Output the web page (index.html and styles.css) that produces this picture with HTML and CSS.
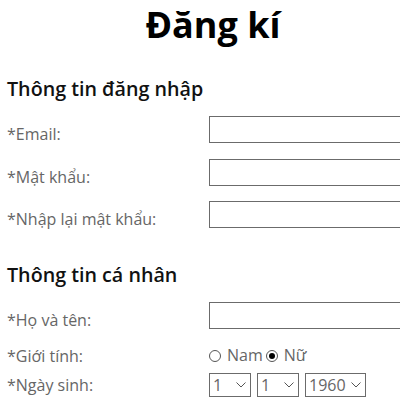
FILE: index.html
```html
<!DOCTYPE html>
<html lang="vi">
<head>
<meta charset="utf-8">
<title>Đăng kí</title>
<link rel="stylesheet" href="styles.css">
</head>
<body>
<div class="page">
  <h1 class="title">Đăng kí</h1>
  <h2 class="section">Thông tin đăng nhập</h2>
  <div class="rows">
    <div class="row"><label class="lbl">*Email:</label><input class="field" type="text"></div>
    <div class="row"><label class="lbl">*Mật khẩu:</label><input class="field" type="password"></div>
    <div class="row"><label class="lbl">*Nhập lại mật khẩu:</label><input class="field" type="password"></div>
  </div>
  <h2 class="section section-2">Thông tin cá nhân</h2>
  <div class="rows">
    <div class="row"><label class="lbl">*Họ và tên:</label><input class="field" type="text"></div>
  </div>
  <div class="row row-gender">
    <span class="lbl">*Giới tính:</span>
    <span class="choices">
      <label class="choice"><input class="radio" type="radio" name="gt">Nam</label>
      <label class="choice"><input class="radio" type="radio" name="gt" checked>Nữ</label>
    </span>
  </div>
  <div class="row row-date">
    <span class="lbl">*Ngày sinh:</span>
    <span class="selects">
      <select class="sel sel-s"><option>1</option></select>
      <select class="sel sel-s"><option>1</option></select>
      <select class="sel sel-l"><option>1960</option></select>
    </span>
  </div>
</div>
</body>
</html>
```
FILE: styles.css
```css
html, body {
  margin: 0;
  padding: 0;
  background: #fff;
  overflow: hidden;
}
body {
  font-family: "Open Sans", "Noto Sans", sans-serif;
  color: #666;
}
.page {
  width: 393px;
  padding: 0 0 0 7px;
  overflow: hidden;
}
.title {
  margin: 0;
  height: 50px;
  font-size: 36px;
  line-height: 50px;
  font-weight: 700;
  color: #000;
  text-align: center;
  width: 412px;
}
.section {
  margin: 25px 0 0 0;
  font-size: 19.7px;
  line-height: 28px;
  font-weight: 600;
  color: #111;
}
.section-2 {
  margin-top: 33px;
}
.rows {
  display: flex;
  flex-direction: column;
  gap: 15.5px;
  margin-top: 13px;
}
.row {
  display: grid;
  grid-template-columns: 202px 1fr;
  align-items: end;
}
.lbl {
  font-size: 16px;
  line-height: 18px;
  color: #666;
}
.field {
  box-sizing: border-box;
  height: 27px;
  width: 230px;
  margin: 0;
  border: 1px solid #6b6b6b;
  border-radius: 0;
  padding: 0 4px;
  font: 13px "Open Sans", sans-serif;
  outline: none;
}
.row-gender {
  margin-top: 15px;
  align-items: baseline;
}
.row-gender .lbl, .choices {
  line-height: 22px;
}
.choices {
  display: flex;
  align-items: center;
  font-size: 16px;
  color: #666;
}
.choice {
  display: inline-flex;
  align-items: center;
  margin-right: 3px;
}
.radio {
  appearance: none;
  -webkit-appearance: none;
  box-sizing: border-box;
  width: 12px;
  height: 12px;
  margin: 1px 6px 0 0;
  border: 1px solid #555;
  border-radius: 50%;
  background: #fff;
  display: inline-grid;
  place-content: center;
}
.radio:checked::before {
  content: "";
  width: 6px;
  height: 6px;
  border-radius: 50%;
  background: #000;
}
.row-date {
  margin-top: 6px;
  align-items: baseline;
}
.row-date .lbl {
  line-height: 22px;
}
.selects {
  display: flex;
  gap: 6px;
  align-items: baseline;
}
.sel {
  appearance: none;
  -webkit-appearance: none;
  box-sizing: border-box;
  height: 24px;
  margin: 0;
  border: 1px solid #6b6b6b;
  border-radius: 0;
  background: #fff url("data:image/svg+xml,%3Csvg xmlns='http://www.w3.org/2000/svg' width='10' height='6' viewBox='0 0 10 6'%3E%3Cpath d='M0.5 0.5 L5 5 L9.5 0.5' fill='none' stroke='%23555' stroke-width='1'/%3E%3C/svg%3E") no-repeat right 4px center;
  font: 16px/22px "Open Sans", sans-serif;
  color: #666;
  padding: 0 0 0 3px;
}
.sel-s {
  width: 42px;
}
.sel-l {
  width: 61px;
}
```
